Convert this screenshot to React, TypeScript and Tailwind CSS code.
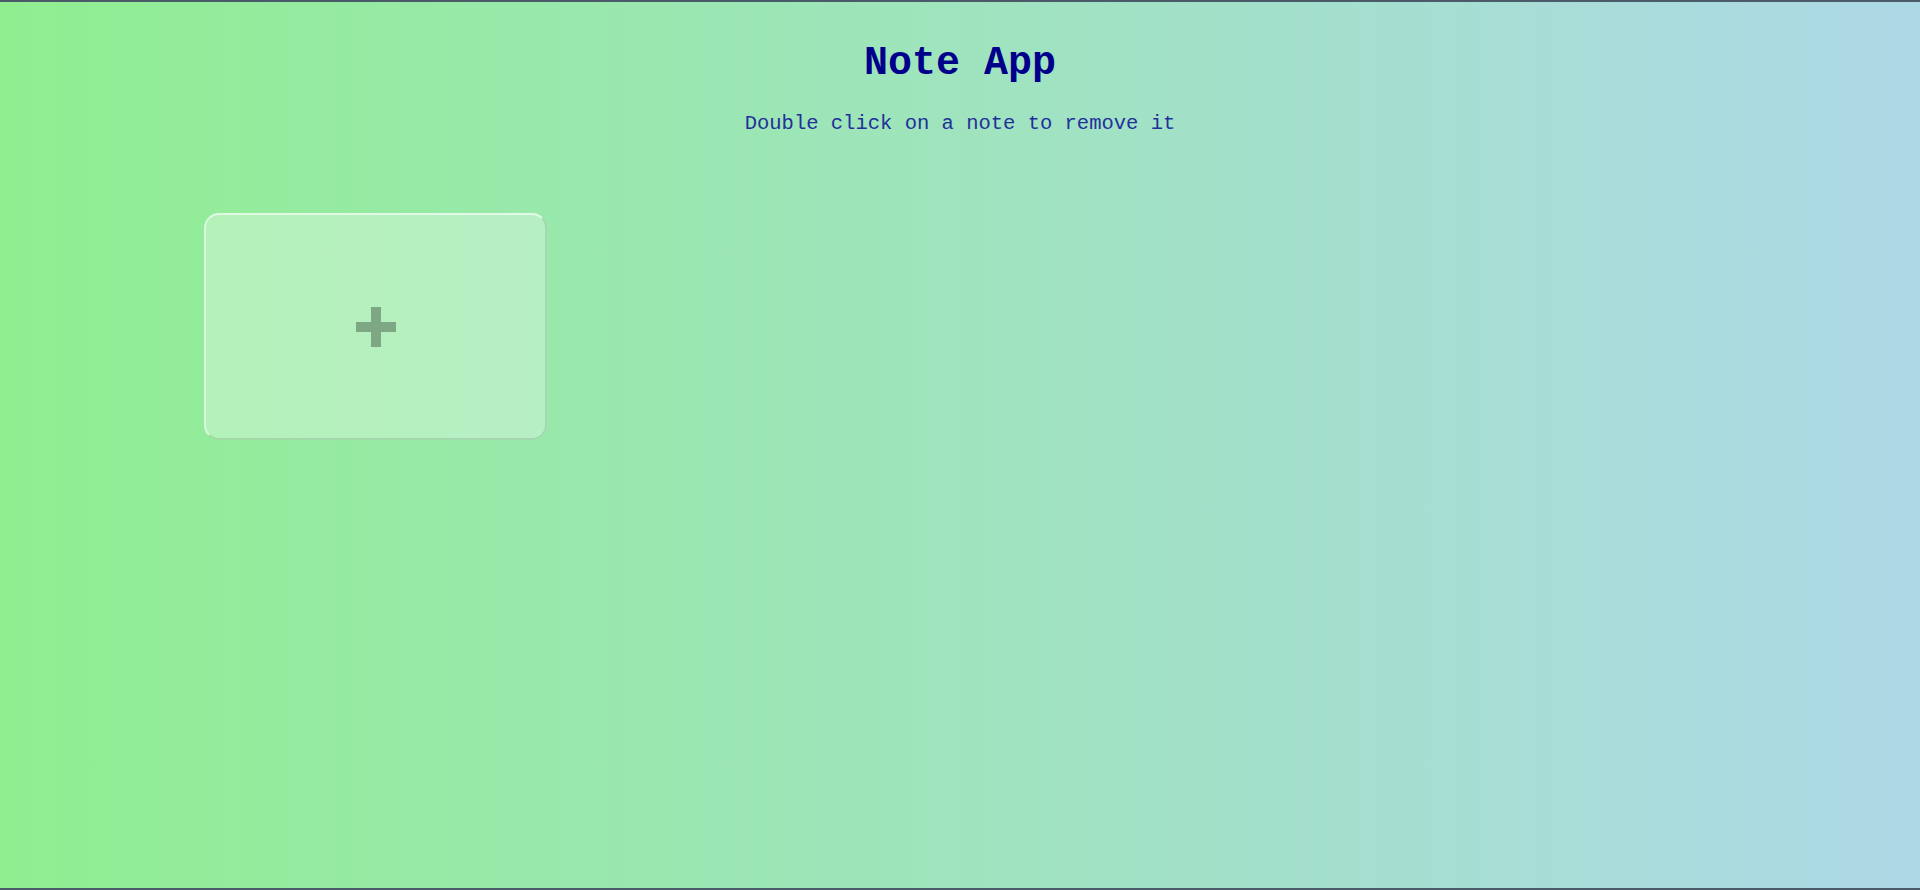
export default function App() {
  return (
    <div className="h-[890px] w-full border-y-2 border-[#4b5a69] bg-gradient-to-r from-[#90ee90] to-[#add8e6] font-['Liberation_Mono',monospace]">
      {/* Header */}
      <div className="pt-[39px] text-center">
        <h1 className="text-[40px] font-bold leading-[46px] text-[#00008b]">Note App</h1>
        <p className="mt-[25px] text-[20.5px] leading-[24px] text-[#23309a]">
          Double click on a note to remove it
        </p>
      </div>

      {/* Notes */}
      <div className="flex flex-wrap gap-6 pl-[204px] pt-[77px]">
        <button className="flex h-[227px] w-[343px] items-center justify-center rounded-[15px] border-2 border-t-white/60 border-l-white/50 border-r-black/10 border-b-black/10 bg-white/30">
          <svg width="40" height="40" viewBox="0 0 40 40">
            <rect x="15" y="0" width="10" height="40" fill="rgba(0,0,0,0.3)" />
            <rect x="0" y="15" width="15" height="10" fill="rgba(0,0,0,0.3)" />
            <rect x="25" y="15" width="15" height="10" fill="rgba(0,0,0,0.3)" />
          </svg>
        </button>
      </div>
    </div>
  );
}
